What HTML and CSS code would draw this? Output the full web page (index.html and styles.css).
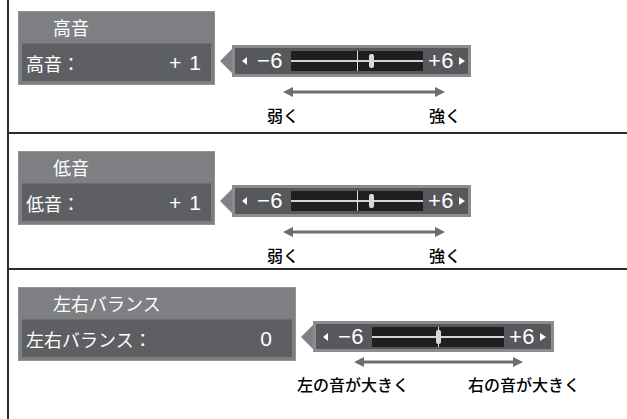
FILE: index.html
```html
<!DOCTYPE html>
<html lang="ja">
<head>
<meta charset="utf-8">
<link rel="stylesheet" href="styles.css">
</head>
<body>
<div class="frame">
  <section class="sec sec1">
    <div class="panel p-short">
      <div class="ptitle">高音</div>
      <div class="prow"><span>高音：</span><span class="val">+1</span></div>
    </div>
    <div class="sgroup">
      <div class="slider">
        <div class="pointer"></div>
        <div class="box">
          <span class="tri-l"></span><span class="num">−6</span>
          <div class="bar"><div class="hline"></div><div class="vline"></div><div class="thumb" style="left:78px"></div></div>
          <span class="num nr">+6</span><span class="tri-r"></span>
        </div>
      </div>
      <div class="scale sc-short">
        <svg class="arrow" viewBox="0 0 162 10" preserveAspectRatio="none"><polygon points="0,5 10,0 10,3.5 152,3.5 152,0 162,5 152,10 152,6.5 10,6.5 10,10" fill="#6d6e72"/></svg>
        <div class="labels l-short"><span>弱く</span><span>強く</span></div>
      </div>
    </div>
  </section>
  <section class="sec sec2">
    <div class="panel p-short">
      <div class="ptitle">低音</div>
      <div class="prow"><span>低音：</span><span class="val">+1</span></div>
    </div>
    <div class="sgroup">
      <div class="slider">
        <div class="pointer"></div>
        <div class="box">
          <span class="tri-l"></span><span class="num">−6</span>
          <div class="bar"><div class="hline"></div><div class="vline"></div><div class="thumb" style="left:78px"></div></div>
          <span class="num nr">+6</span><span class="tri-r"></span>
        </div>
      </div>
      <div class="scale sc-short">
        <svg class="arrow" viewBox="0 0 162 10" preserveAspectRatio="none"><polygon points="0,5 10,0 10,3.5 152,3.5 152,0 162,5 152,10 152,6.5 10,6.5 10,10" fill="#6d6e72"/></svg>
        <div class="labels l-short"><span>弱く</span><span>強く</span></div>
      </div>
    </div>
  </section>
  <section class="sec sec3">
    <div class="panel p-long">
      <div class="ptitle">左右バランス</div>
      <div class="prow"><span>左右バランス：</span><span class="val v0">0</span></div>
    </div>
    <div class="sgroup sg3">
      <div class="slider">
        <div class="pointer"></div>
        <div class="box b3">
          <span class="tri-l"></span><span class="num">−6</span>
          <div class="bar"><div class="hline"></div><div class="vline"></div><div class="thumb" style="left:64px"></div></div>
          <span class="num nr">+6</span><span class="tri-r"></span>
        </div>
      </div>
      <div class="scale sc-long">
        <svg class="arrow" viewBox="0 0 169 10" preserveAspectRatio="none"><polygon points="0,5 10,0 10,3.5 159,3.5 159,0 169,5 159,10 159,6.5 10,6.5 10,10" fill="#6d6e72"/></svg>
        <div class="labels l-long"><span>左の音が大きく</span><span>右の音が大きく</span></div>
      </div>
    </div>
  </section>
</div>
</body>
</html>
```
FILE: styles.css
```css
html, body {
  margin: 0;
  padding: 0;
  background: #fff;
}
body {
  width: 627px;
  height: 419px;
  overflow: hidden;
  font-family: "Noto Sans CJK JP", "Noto Sans", sans-serif;
}
.frame {
  margin-left: 7px;
  border-left: 2px solid #2b2b2b;
  height: 419px;
}
.sec {
  display: flex;
  align-items: flex-start;
  padding-left: 9px;
  box-sizing: border-box;
}
.sec1 { height: 132px; padding-top: 11px; }
.sec2 { height: 136px; padding-top: 17px; border-top: 2px solid #2b2b2b; }
.sec3 { height: 151px; padding-top: 17px; border-top: 2px solid #2b2b2b; }

.panel {
  background: #7e7f83;
  border: 1px solid #929397;
  padding: 0 3px 3px 3px;
  box-sizing: border-box;
  color: #fff;
}
.p-short { width: 197px; }
.p-long { width: 278px; }
.ptitle {
  height: 31px;
  line-height: 31px;
  padding-left: 31px;
  font-size: 18px;
  font-weight: 400;
}
.prow {
  height: 37px;
  background: #5e5f63;
  border-top: 1px solid #6c6d71;
  display: flex;
  align-items: center;
  justify-content: space-between;
  padding: 0 10px 0 4px;
  font-size: 18px;
  font-weight: 400;
}
.val {
  font-family: "Liberation Sans", sans-serif;
  font-size: 21px;
  font-weight: 400;
  letter-spacing: 8px;
  margin-right: -8px;
}
.v0 { margin-right: 2px; }

.sgroup {
  margin-left: 5px;
  margin-top: 34px;
  display: flex;
  flex-direction: column;
}
.slider {
  display: flex;
  align-items: center;
}
.pointer {
  width: 0;
  height: 0;
  border-top: 12px solid transparent;
  border-bottom: 12px solid transparent;
  border-right: 12px solid #808185;
}
.box {
  height: 32px;
  box-sizing: border-box;
  width: 239px;
  background: #57585c;
  border: 3px solid #8b8c90;
  display: flex;
  align-items: center;
  padding-left: 7px;
  color: #fff;
}
.b3 { height: 31px; width: 241px; }
.tri-l {
  width: 0; height: 0;
  border-top: 4px solid transparent;
  border-bottom: 4px solid transparent;
  border-right: 5px solid #fff;
}
.tri-r {
  width: 0; height: 0;
  border-top: 4px solid transparent;
  border-bottom: 4px solid transparent;
  border-left: 6px solid #fff;
  margin-left: 5px;
}
.num {
  display: inline-block;
  width: 27px;
  white-space: nowrap;
  font-family: "Liberation Sans", sans-serif;
  font-size: 22px;
  line-height: 22px;
  margin-left: 10px;
  letter-spacing: 0.5px;
}
.nr { margin-left: 5px; width: 26px; }
.bar {
  position: relative;
  width: 132px;
  height: 20px;
  background: #1f1f1f;
  margin-left: 7px;
  border-radius: 1px;
}
.hline {
  position: absolute;
  left: 0; right: 0;
  top: 9px;
  height: 2px;
  background: #d4d4d4;
}
.vline {
  position: absolute;
  top: 0; bottom: 0;
  left: 66px;
  width: 1px;
  background: #e0e0e0;
}
.thumb {
  position: absolute;
  top: 3px;
  width: 5px;
  height: 14px;
  border-radius: 2px;
  background: #d9d9d9;
}

.scale {
  display: flex;
  flex-direction: column;
}
.sc-short { margin-left: 63px; width: 162px; margin-top: 10px; }
.sc-long { margin-left: 53px; width: 169px; margin-top: 5px; }
.arrow {
  display: block;
  width: 100%;
  height: 10px;
}
.labels {
  display: flex;
  justify-content: space-between;
  font-size: 16px;
  font-weight: 500;
  line-height: 18px;
  color: #000;
}
.l-short { margin: 9px -16px 0; }
.l-long { margin: 8px -57px 0; }
```
